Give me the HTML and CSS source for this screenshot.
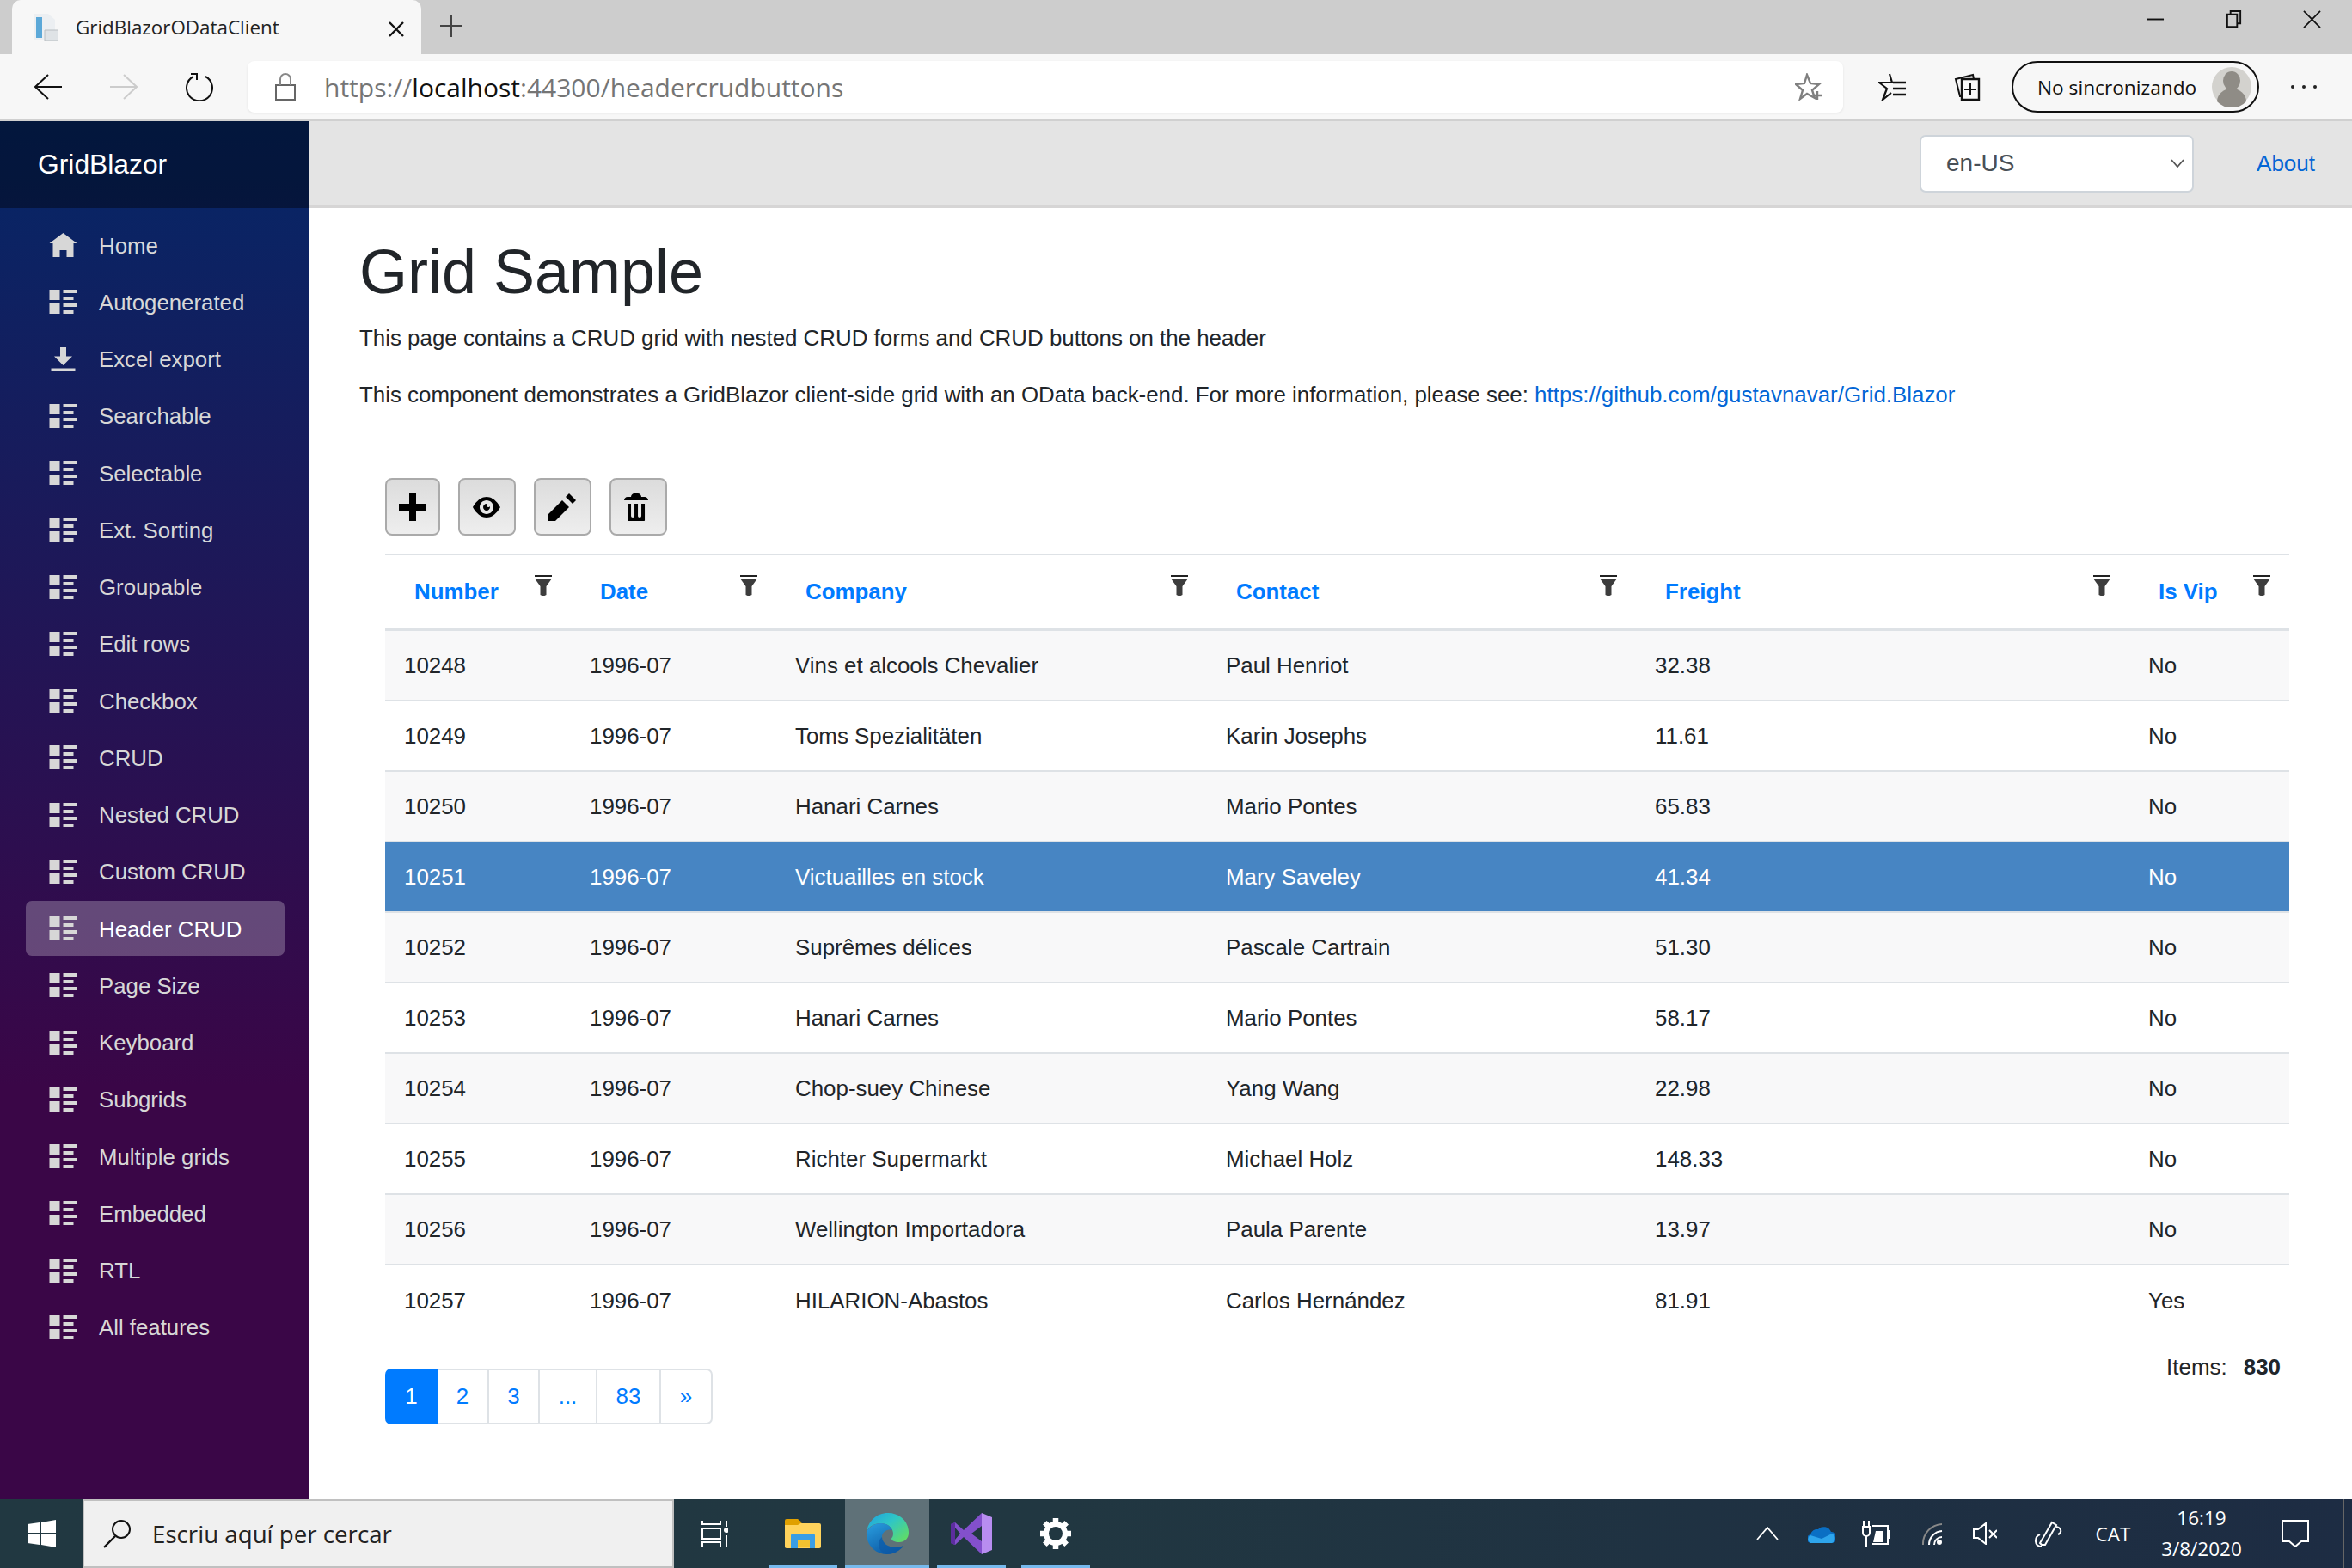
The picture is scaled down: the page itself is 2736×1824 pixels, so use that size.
FILE: index.html
```html
<!DOCTYPE html>
<html>
<head>
  <title>GridBlazorODataClient</title>
  <meta name="viewport" content="width=device-width, initial-scale=1.0">
  <link rel="stylesheet" href="styles.css">
</head>
<body>

  <svg class="sprite">
    <symbol id="i-home" viewBox="0 0 8 7"><path d="M4 0l-4 3h1v4h2v-2h2v2h2v-4.03l1 .03-4-3z"/></symbol>
    <symbol id="i-list" viewBox="0 0 8 7"><path d="M0 0v3h3v-3h-3zm4 0v1h4v-1h-4zm0 2v1h3v-1h-3zm-4 2v3h3v-3h-3zm4 0v1h4v-1h-4zm0 2v1h3v-1h-3z"/></symbol>
    <symbol id="i-down" viewBox="0 0 8 8"><path d="M3 0v3h-2l3 3 3-3h-2v-3h-2zm-3 7v1h8v-1h-8z"/></symbol>
    <symbol id="i-filter" viewBox="0 0 20 24"><path d="M0 0h20v2h-20z"/><path d="M0 4h20l-6.500 9v10l-2 1h-3l-2-1v-10z" opacity=".88"/></symbol>
  </svg>

  <div class="browser-tabs">
    <div class="tab">
      <svg class="favicon" viewBox="0 0 32 32"><path d="M3 0h17l8 7v24h-25z" fill="#eceff2"/><path d="M6 4h7v24h-7z" fill="#5ba8d8"/><path d="M16 19h16v13h-16z" fill="#dfe3e6" stroke="#b9bec2"/></svg>
      <span class="tab-title">GridBlazorODataClient</span>
      <svg class="tab-close" viewBox="0 0 18 18"><path d="M1 1l16 16M17 1l-16 16" stroke="#111" stroke-width="2.4"/></svg>
    </div>
    <svg class="new-tab" viewBox="0 0 26 26"><path d="M13 0v26M0 13h26" stroke="#444" stroke-width="2"/></svg>
    <div class="window-controls">
      <svg class="win-btn" viewBox="0 0 22 22"><path d="M1 11h20" stroke="#111" stroke-width="2"/></svg>
      <svg class="win-btn" viewBox="0 0 22 22"><path d="M3 5h12v15h-12z M7 5v-4h12v15h-4" fill="none" stroke="#111" stroke-width="2"/></svg>
      <svg class="win-btn" viewBox="0 0 22 22"><path d="M1 1l20 20M21 1l-20 20" stroke="#111" stroke-width="1.8"/></svg>
    </div>
  </div>

  <div class="browser-toolbar">
    <svg class="tool-back" viewBox="0 0 32 30"><path d="M16 1l-15 14 15 14M1 15h31" fill="none" stroke="#111" stroke-width="2"/></svg>
    <svg class="tool-forward" viewBox="0 0 32 30"><path d="M16 1l15 14-15 14M31 15h-31" fill="none" stroke="#ccc" stroke-width="2"/></svg>
    <svg class="tool-refresh" viewBox="0 0 32 32"><path d="M9 4a15 15 0 1 0 14 0" fill="none" stroke="#111" stroke-width="2"/><path d="M6 1h7v7" fill="none" stroke="#111" stroke-width="2"/></svg>
    <div class="address-box">
      <svg class="lock" viewBox="0 0 24 32"><path d="M1 14h22v17h-22z" fill="none" stroke="#666" stroke-width="2"/><path d="M6 14v-7a6 6 0 0 1 12 0v7" fill="none" stroke="#888" stroke-width="2"/></svg>
      <span class="url"><span class="url-dim">https://</span>localhost<span class="url-dim">:44300/headercrudbuttons</span></span>
      <svg class="url-star" viewBox="0 0 32 32"><path d="M14 2l4 10 10 1-8 7 3 9-9-5-8 6 3-10-8-7 10-1z" fill="none" stroke="#808080" stroke-width="2.4"/><path d="M26 21v10M21 26h10" stroke="#808080" stroke-width="2.4"/></svg>
    </div>
    <svg class="tool-fav" viewBox="0 0 32 32"><path d="M13 1l3 10h-15l9 7-5 13 10-8" fill="none" stroke="#111" stroke-width="2.2"/><path d="M17 11h15M17 18h15M17 25h15" stroke="#111" stroke-width="2.4"/></svg>
    <svg class="tool-coll" viewBox="0 0 32 32"><path d="M9 7h20v24h-20z" fill="none" stroke="#111" stroke-width="2.4"/><path d="M9 27h-2l-5-20 20-5 1 5" fill="none" stroke="#111" stroke-width="2"/><path d="M19 12v14M12 19h14" stroke="#111" stroke-width="2"/></svg>
    <div class="profile-pill">
      <span class="profile-text">No sincronizando</span>
      <svg class="avatar" viewBox="0 0 46 46"><circle cx="23" cy="23" r="23" fill="#d3d2ce"/><ellipse cx="23" cy="16" rx="10" ry="11" fill="#8f8c86"/><path d="M6 40a17 15 0 0 1 34 0 23 23 0 0 1-34 0z" fill="#8f8c86"/></svg>
    </div>
    <div class="tool-dots"><i></i><i></i><i></i></div>
  </div>

  <div class="page">
    <div class="sidebar">
      <div class="brand">GridBlazor</div>
      <ul class="nav">
        <li class="nav-item"><svg class="nav-icon"><use href="#i-home"/></svg>Home</li>
        <li class="nav-item"><svg class="nav-icon"><use href="#i-list"/></svg>Autogenerated</li>
        <li class="nav-item"><svg class="nav-icon"><use href="#i-down"/></svg>Excel export</li>
        <li class="nav-item"><svg class="nav-icon"><use href="#i-list"/></svg>Searchable</li>
        <li class="nav-item"><svg class="nav-icon"><use href="#i-list"/></svg>Selectable</li>
        <li class="nav-item"><svg class="nav-icon"><use href="#i-list"/></svg>Ext. Sorting</li>
        <li class="nav-item"><svg class="nav-icon"><use href="#i-list"/></svg>Groupable</li>
        <li class="nav-item"><svg class="nav-icon"><use href="#i-list"/></svg>Edit rows</li>
        <li class="nav-item"><svg class="nav-icon"><use href="#i-list"/></svg>Checkbox</li>
        <li class="nav-item"><svg class="nav-icon"><use href="#i-list"/></svg>CRUD</li>
        <li class="nav-item"><svg class="nav-icon"><use href="#i-list"/></svg>Nested CRUD</li>
        <li class="nav-item"><svg class="nav-icon"><use href="#i-list"/></svg>Custom CRUD</li>
        <li class="nav-item active"><svg class="nav-icon"><use href="#i-list"/></svg>Header CRUD</li>
        <li class="nav-item"><svg class="nav-icon"><use href="#i-list"/></svg>Page Size</li>
        <li class="nav-item"><svg class="nav-icon"><use href="#i-list"/></svg>Keyboard</li>
        <li class="nav-item"><svg class="nav-icon"><use href="#i-list"/></svg>Subgrids</li>
        <li class="nav-item"><svg class="nav-icon"><use href="#i-list"/></svg>Multiple grids</li>
        <li class="nav-item"><svg class="nav-icon"><use href="#i-list"/></svg>Embedded</li>
        <li class="nav-item"><svg class="nav-icon"><use href="#i-list"/></svg>RTL</li>
        <li class="nav-item"><svg class="nav-icon"><use href="#i-list"/></svg>All features</li>
      </ul>
    </div>

    <div class="main">
      <div class="top-row">
        <div class="lang-select">en-US
          <svg class="lang-arrow" viewBox="0 0 16 10"><path d="M1 1l7 8 7-8" fill="none" stroke="#555" stroke-width="1.8"/></svg>
        </div>
        <a class="about" href="#">About</a>
      </div>

      <div class="content">
        <h1>Grid Sample</h1>
        <p class="intro">This page contains a CRUD grid with nested CRUD forms and CRUD buttons on the header</p>
        <p class="intro intro-second">This component demonstrates a GridBlazor client-side grid with an OData back-end. For more information, please see: <a href="#">https://github.com/gustavnavar/Grid.Blazor</a></p>

        <div class="grid-wrap">
          <div class="grid-buttons">
            <button class="grid-btn btn-add"><svg viewBox="0 0 8 8"><path d="M3 0v3h-3v2h3v3h2v-3h3v-2h-3v-3h-2z"/></svg></button>
            <button class="grid-btn"><svg viewBox="0 0 8 8"><path transform="translate(0 1)" d="M4.030 0c-2.530 0-4.030 3-4.030 3s1.500 3 4.030 3c2.470 0 3.970-3 3.970-3s-1.500-3-3.970-3zm-.03 1c1.110 0 2 .9 2 2 0 1.110-.89 2-2 2-1.100 0-2-.89-2-2 0-1.100.9-2 2-2zm0 1c-.55 0-1 .45-1 1s.45 1 1 1 1-.45 1-1c0-.1-.04-.19-.06-.28-.08.16-.24.28-.44.28-.28 0-.5-.22-.5-.5 0-.2.12-.36.28-.44-.09-.03-.18-.06-.28-.06z"/></svg></button>
            <button class="grid-btn"><svg viewBox="0 0 8 8"><path d="M6 0l-1 1 2 2 1-1-2-2zm-2 2l-4 4v2h2l4-4-2-2z"/></svg></button>
            <button class="grid-btn"><svg viewBox="0 0 8 8"><path d="M3 0c-.55 0-1 .45-1 1h-1c-.55 0-1 .45-1 1h7c0-.55-.45-1-1-1h-1c0-.55-.45-1-1-1h-1zm-2 3v4.810c0 .11.08.19.19.19h4.630c.11 0 .19-.08.19-.19v-4.810h-1v3.500c0 .28-.22.5-.5.5s-.5-.22-.5-.5v-3.500h-1v3.500c0 .28-.22.5-.5.5s-.5-.22-.5-.5v-3.500h-1z"/></svg></button>
          </div>

          <table class="grid-table">
            <colgroup>
              <col class="col-number"><col class="col-date"><col class="col-company"><col class="col-contact"><col class="col-freight"><col class="col-vip">
            </colgroup>
            <thead>
              <tr>
                <th><div class="th-inner"><a href="#">Number</a><svg class="filter"><use href="#i-filter"/></svg></div></th>
                <th><div class="th-inner"><a href="#">Date</a><svg class="filter"><use href="#i-filter"/></svg></div></th>
                <th><div class="th-inner"><a href="#">Company</a><svg class="filter"><use href="#i-filter"/></svg></div></th>
                <th><div class="th-inner"><a href="#">Contact</a><svg class="filter"><use href="#i-filter"/></svg></div></th>
                <th><div class="th-inner"><a href="#">Freight</a><svg class="filter"><use href="#i-filter"/></svg></div></th>
                <th><div class="th-inner"><a href="#">Is Vip</a><svg class="filter"><use href="#i-filter"/></svg></div></th>
              </tr>
            </thead>
            <tbody>
              <tr class="striped"><td>10248</td><td>1996-07</td><td>Vins et alcools Chevalier</td><td>Paul Henriot</td><td>32.38</td><td>No</td></tr>
              <tr><td>10249</td><td>1996-07</td><td>Toms Spezialitäten</td><td>Karin Josephs</td><td>11.61</td><td>No</td></tr>
              <tr class="striped"><td>10250</td><td>1996-07</td><td>Hanari Carnes</td><td>Mario Pontes</td><td>65.83</td><td>No</td></tr>
              <tr class="selected"><td>10251</td><td>1996-07</td><td>Victuailles en stock</td><td>Mary Saveley</td><td>41.34</td><td>No</td></tr>
              <tr class="striped"><td>10252</td><td>1996-07</td><td>Suprêmes délices</td><td>Pascale Cartrain</td><td>51.30</td><td>No</td></tr>
              <tr><td>10253</td><td>1996-07</td><td>Hanari Carnes</td><td>Mario Pontes</td><td>58.17</td><td>No</td></tr>
              <tr class="striped"><td>10254</td><td>1996-07</td><td>Chop-suey Chinese</td><td>Yang Wang</td><td>22.98</td><td>No</td></tr>
              <tr><td>10255</td><td>1996-07</td><td>Richter Supermarkt</td><td>Michael Holz</td><td>148.33</td><td>No</td></tr>
              <tr class="striped"><td>10256</td><td>1996-07</td><td>Wellington Importadora</td><td>Paula Parente</td><td>13.97</td><td>No</td></tr>
              <tr class="last-row"><td>10257</td><td>1996-07</td><td>HILARION-Abastos</td><td>Carlos Hernández</td><td>81.91</td><td>Yes</td></tr>
            </tbody>
          </table>

          <div class="grid-footer">
            <div class="pager">
              <a class="page-link page-first current" href="#">1</a>
              <a class="page-link page-2" href="#">2</a>
              <a class="page-link page-3" href="#">3</a>
              <a class="page-link page-dots" href="#">...</a>
              <a class="page-link page-83" href="#">83</a>
              <a class="page-link page-next" href="#">»</a>
            </div>
            <div class="items-count">Items: <strong>830</strong></div>
          </div>
        </div>
      </div>
    </div>
  </div>

  <div class="taskbar">
    <div class="start">
      <svg class="start-logo" viewBox="0 0 33 32"><path d="M0 5l14-2v12h-14zM16 3l17-3v15h-17zM0 17h14v12l-14-2zM16 17h17v15l-17-3z" fill="#fff"/></svg>
    </div>
    <div class="search-box">
      <svg class="search-icon" viewBox="0 0 33 34"><circle cx="21" cy="12" r="10" fill="none" stroke="#111" stroke-width="2"/><path d="M14 20l-13 13" stroke="#111" stroke-width="2.4"/></svg>
      <span class="search-text">Escriu aquí per cercar</span>
    </div>
    <div class="task-cell cell-view">
      <svg class="task-view" viewBox="0 0 31 32"><path d="M1 1v4h21v-4M1 31v-5h21v5M1 10h21v12h-21zM29 1v7M29 18v13" fill="none" stroke="#fff" stroke-width="2"/><circle cx="29" cy="12" r="3" fill="#fff"/></svg>
    </div>
    <div class="task-cell running">
      <svg class="task-folder" viewBox="0 0 42 34"><path d="M0 5h40a2 2 0 0 1 2 2v25a2 2 0 0 1-2 2h-38a2 2 0 0 1-2-2z" fill="#ffd35c"/><path d="M0 2a2 2 0 0 1 2-2h13l5 4-5 3h-15z" fill="#e0a000"/><path d="M7 19a2 2 0 0 1 2-2h24a2 2 0 0 1 2 2v15h-6v-10h-14v10h-8z" fill="#3a9ee6"/><path d="M15 24h14v8h-14z" fill="#f2c230"/></svg>
    </div>
    <div class="task-cell running active">
      <svg class="task-edge" viewBox="0 0 50 48">
        <defs>
          <linearGradient id="edge-top" x1="0" y1="0" x2="1" y2=".8"><stop offset="0" stop-color="#1f9fe0"/><stop offset=".5" stop-color="#2fc6c6"/><stop offset="1" stop-color="#5fdc68"/></linearGradient>
          <linearGradient id="edge-low" x1="0" y1="0" x2=".6" y2="1"><stop offset="0" stop-color="#2a9fe0"/><stop offset="1" stop-color="#0c59a4"/></linearGradient>
        </defs>
        <path d="M1 22C3 9 13 0 26 0c13 0 24 9 24 23 0 7-5 11-11 11-5 0-9-2-9-4 0-1 2-2 2-6 0-6-6-12-14-12C10 12 3 16 1 22z" fill="url(#edge-top)"/>
        <path d="M1 22c3-6 9-10 17-10 6 0 11 3 13 8-6-2-12 2-12 8 0 7 7 12 15 12 4 0 8-1 10-2-4 6-12 10-19 10C12 48 0 38 1 22z" fill="url(#edge-low)"/>
        <path d="M19 28c0 7 7 12 15 12 4 0 8-1 10-2-4 6-12 10-19 10-6-1-10-6-10-12 0-4 2-6 4-8z" fill="#0d5aa6" opacity=".7"/>
      </svg>
    </div>
    <div class="task-cell running">
      <svg class="task-vs" viewBox="0 0 48 48"><path fill-rule="evenodd" d="M36 0L15 20 5 11 0 13v22l5 2 10-9 21 20V33L24 24l12-9zM5 17v14l6-7z" fill="#8350cc"/><path d="M0 13l5-2v6l0 14v6l-5-2z" fill="#5c2d9e"/><path d="M36 0l12 5v38l-12 5z" fill="#b88df0"/></svg>
    </div>
    <div class="task-cell running">
      <svg class="task-gear" viewBox="0 0 36 36"><circle cx="18" cy="18" r="11" fill="none" stroke="#fff" stroke-width="6"/><path d="M18 0v7M18 29v7M0 18h7M29 18h7M5.300 5.300l5 5M25.700 25.700l5 5M5.300 30.700l5-5M25.700 10.300l5-5" stroke="#fff" stroke-width="6.500"/></svg>
    </div>

    <div class="tray">
      <div class="tray-item tray-chevron"><svg class="tray-svg-chevron" viewBox="0 0 26 16"><path d="M1 15l12-14 12 14" fill="none" stroke="#fff" stroke-width="1.800"/></svg></div>
      <div class="tray-item tray-cloud"><svg class="tray-svg-cloud" viewBox="0 0 32 22"><path d="M5 22a5 5 0 0 1-2-10 8 8 0 0 1 9-6 9 9 0 0 1 15 3 6 6 0 0 1 1 13z" fill="#0a6fc4"/><path d="M3 22a5 5 0 0 1 0-9l13 4 12-6a6 6 0 0 1 0 11z" fill="#2ea5ec"/></svg></div>
      <div class="tray-item tray-battery"><svg class="tray-svg-battery" viewBox="0 0 33 30"><path d="M12 6h18v21h-18" fill="none" stroke="#fff" stroke-width="2"/><path d="M16 12h9v13h-12z" fill="#fff"/><path d="M30 11h3v10h-3z" fill="#fff"/><path d="M2 0v7M8 0v7M1 7h8v7a4 4 0 0 1-8 0zM5 18v12" fill="none" stroke="#fff" stroke-width="2"/></svg></div>
      <div class="tray-item tray-wifi"><svg class="tray-svg-wifi" viewBox="0 0 24 26"><path d="M1 26a23 23 0 0 1 22-24" fill="none" stroke="#888" stroke-width="2"/><path d="M8 26a16 16 0 0 1 15-16" fill="none" stroke="#fff" stroke-width="2"/><path d="M14 26a9 9 0 0 1 9-9" fill="none" stroke="#fff" stroke-width="2"/><circle cx="20" cy="23" r="3" fill="#fff"/></svg></div>
      <div class="tray-item tray-volume"><svg class="tray-svg-volume" viewBox="0 0 28 26"><path d="M1 8h5l9-7v24l-9-7h-5z" fill="none" stroke="#fff" stroke-width="2"/><path d="M19 9l9 9M28 9l-9 9" stroke="#fff" stroke-width="2"/></svg></div>
      <div class="tray-item tray-pen"><svg class="tray-svg-pen" viewBox="0 0 33 32"><path d="M9 29l-2-2 14-24 5 3-13 23z" fill="none" stroke="#fff" stroke-width="2"/><path d="M26 8c6 1 7 7 2 9M7 17c-7 3-7 14 2 14" fill="none" stroke="#fff" stroke-width="2"/></svg></div>
      <div class="tray-item tray-lang">CAT</div>
      <div class="tray-item tray-clock"><span>16:19</span><span>3/8/2020</span></div>
      <div class="tray-item tray-notify"><svg class="tray-svg-notify" viewBox="0 0 32 32"><path d="M1 1h30v24h-8l-7 6-7-6h-8z" fill="none" stroke="#fff" stroke-width="2"/></svg></div>
      <div class="tray-desktop"></div>
    </div>
  </div>

</body>
</html>
```

FILE: styles.css
```css
* {
  box-sizing: border-box;
}
html, body {
  margin: 0;
  padding: 0;
}
body {
  width: 2736px;
  height: 1824px;
  overflow: hidden;
  display: flex;
  flex-direction: column;
  font-family: "Liberation Sans", Arial, sans-serif;
  font-size: 25.9px;
  color: #212529;
  background: #fff;
}
a {
  color: #0366d6;
  text-decoration: none;
}
.sprite {
  display: none;
}

/* browser chrome */
.browser-tabs {
  height: 63px;
  flex: none;
  display: flex;
  align-items: flex-start;
  background: #cdcdcd;
  padding-left: 14px;
  font-family: "Open Sans", sans-serif;
}
.tab {
  width: 476px;
  height: 63px;
  display: flex;
  align-items: center;
  background: #f7f7f7;
  border-radius: 10px 10px 0 0;
  padding-left: 22px;
}
.favicon {
  width: 32px;
  height: 32px;
}
.tab-title {
  margin-left: 20px;
  width: 364px;
  font-size: 22.4px;
  color: #222;
}
.tab-close {
  width: 18px;
  height: 18px;
  margin-top: 4px;
}
.new-tab {
  width: 26px;
  height: 26px;
  margin: 17px 0 0 22px;
}
.window-controls {
  margin-left: auto;
  display: flex;
  gap: 70px;
  padding: 12px 36px 0 0;
}
.win-btn {
  width: 21px;
  height: 21px;
}
.browser-toolbar {
  height: 78px;
  flex: none;
  display: flex;
  align-items: center;
  background: #f7f7f7;
  border-bottom: 2px solid #d0d0d0;
  padding-left: 40px;
  font-family: "Open Sans", sans-serif;
}
.tool-back, .tool-forward {
  width: 32px;
  height: 30px;
}
.tool-forward {
  margin-left: 56px;
}
.tool-refresh {
  width: 32px;
  height: 32px;
  margin-left: 56px;
}
.address-box {
  width: 1856px;
  height: 60px;
  margin-left: 40px;
  display: flex;
  align-items: center;
  background: #fff;
  border-radius: 8px;
  box-shadow: 0 1px 3px rgba(0, 0, 0, .08);
  padding-left: 32px;
}
.lock {
  width: 24px;
  height: 32px;
}
.url {
  margin-left: 33px;
  font-size: 30px;
  color: #111;
}
.url-dim {
  color: #757575;
}
.url-star {
  width: 32px;
  height: 32px;
  margin-left: auto;
  margin-right: 24px;
}
.tool-fav {
  width: 32px;
  height: 32px;
  margin-left: 41px;
}
.tool-coll {
  width: 32px;
  height: 32px;
  margin-left: 56px;
}
.profile-pill {
  width: 288px;
  height: 60px;
  margin-left: 35px;
  display: flex;
  align-items: center;
  border: 2px solid #111;
  border-radius: 30px;
  padding-left: 28px;
}
.profile-text {
  width: 203px;
  font-size: 22.7px;
  color: #111;
  white-space: nowrap;
}
.avatar {
  width: 46px;
  height: 46px;
}
.tool-dots {
  margin-left: 37px;
  display: flex;
  gap: 9px;
}
.tool-dots i {
  width: 4px;
  height: 4px;
  border-radius: 50%;
  background: #222;
}

/* page */
.page {
  flex: 1;
  display: flex;
  min-height: 0;
}
.sidebar {
  width: 360px;
  flex: none;
  background: linear-gradient(180deg, #052767 0%, #3a0647 70%);
  color: #d7d7d7;
}
.brand {
  height: 101px;
  display: flex;
  align-items: center;
  padding-left: 44px;
  background: rgba(0, 0, 0, .4);
  color: #fff;
  font-size: 31.8px;
}
.nav {
  list-style: none;
  margin: 0;
  padding: 11px 0 0 30px;
}
.nav-item {
  width: 301px;
  height: 64px;
  margin-bottom: 2.25px;
  display: flex;
  align-items: center;
  padding: 2px 0 0 27px;
  border-radius: 7px;
  font-size: 25.8px;
}
.nav-item.active {
  background: rgba(255, 255, 255, .25);
  color: #fff;
}
.nav-icon {
  width: 33px;
  height: 28px;
  margin: -2px 25px 0 0;
  fill: #d7d7d7;
  flex: none;
}
.main {
  flex: 1;
  min-width: 0;
}
.top-row {
  height: 101px;
  display: flex;
  align-items: center;
  background: #e4e4e4;
  border-bottom: 3px solid #d6d5d5;
  padding: 0 43px 0 1873px;
}
.lang-select {
  width: 319px;
  height: 67px;
  display: flex;
  align-items: center;
  background: #fff;
  border: 2px solid #ced4da;
  border-radius: 7px;
  padding-left: 29px;
  font-size: 28px;
  color: #495057;
}
.lang-arrow {
  width: 16px;
  height: 10px;
  margin-left: auto;
  margin-right: 9px;
}
.about {
  margin-left: auto;
  font-size: 26px;
}
.content {
  padding: 32px 73px 0 58px;
}
h1 {
  margin: 0 0 16px;
  font-size: 72px;
  font-weight: 400;
  line-height: 84px;
}
.intro {
  margin: 0;
  line-height: 38px;
}
.intro-second {
  margin-top: 28px;
}

/* grid */
.grid-wrap {
  margin: 78px 0 0 30px;
}
.grid-buttons {
  display: flex;
  margin-bottom: 21px;
}
.grid-btn {
  width: 66.5px;
  height: 67px;
  margin-right: 21.5px;
  padding: 0;
  display: flex;
  align-items: center;
  justify-content: center;
  background: linear-gradient(180deg, #dcdcdc, #eeeeee);
  border: 2px solid #aaa;
  border-radius: 8px;
}
.btn-add {
  width: 64px;
  margin-right: 21px;
}
.grid-btn svg {
  width: 32px;
  height: 32px;
  fill: #000;
}
.grid-table {
  width: 2215px;
  table-layout: fixed;
  border-collapse: separate;
  border-spacing: 0;
}
.col-number { width: 216px; }
.col-date { width: 239px; }
.col-company { width: 501px; }
.col-contact { width: 499px; }
.col-freight { width: 574px; }
.col-vip { width: 186px; }
.grid-table th {
  height: 90px;
  padding: 0 22px 0 34px;
  border-top: 2px solid #dee2e6;
  border-bottom: 4px solid #dee2e6;
  text-align: left;
}
.grid-table th a {
  color: #007bff;
}
.th-inner {
  display: flex;
  justify-content: space-between;
  align-items: center;
}
.filter {
  width: 20px;
  height: 24px;
  fill: #222;
  margin-top: -14px;
}
.grid-table td {
  height: 82px;
  padding: 0 22px;
  border-bottom: 2px solid #dee2e6;
}
.striped td {
  background: #f8f8f9;
}
.selected td {
  background: #4785c3;
  color: #fff;
}
.last-row td {
  border-bottom: none;
}
.grid-footer {
  display: flex;
  justify-content: space-between;
  align-items: flex-start;
}
.pager {
  margin-top: 38px;
  height: 65px;
  display: flex;
  border: 2px solid #dee2e6;
  border-radius: 7px;
}
.page-link {
  display: flex;
  align-items: center;
  justify-content: center;
  color: #007bff;
  border-right: 2px solid #dee2e6;
  margin: -2px 0;
  padding: 2px 0;
}
.page-first { width: 61px; margin-left: -2px; border-radius: 7px 0 0 7px; border-right: none; }
.page-2 { width: 60px; }
.page-3 { width: 59px; }
.page-dots { width: 67px; }
.page-83 { width: 74px; }
.page-next { width: 58px; border-right: none; }
.current {
  background: #007bff;
  color: #fff;
}
.items-count {
  margin: 17px 10px 0 0;
  line-height: 38px;
  word-spacing: 12px;
}

/* taskbar */
.taskbar {
  height: 80px;
  flex: none;
  display: flex;
  align-items: center;
  background: linear-gradient(90deg, #213841 0%, #213741 45%, #1d2c43 100%);
  font-family: "Open Sans", sans-serif;
  color: #fff;
}
.start {
  width: 96px;
  display: flex;
  justify-content: center;
}
.start-logo {
  width: 33px;
  height: 32px;
}
.search-box {
  width: 688px;
  height: 80px;
  display: flex;
  align-items: center;
  background: #f0f0f0;
  border: 2px solid #c0c0c0;
  padding-left: 22px;
  color: #222;
}
.search-icon {
  width: 33px;
  height: 34px;
}
.search-text {
  margin-left: 24px;
  font-size: 27.7px;
}
.task-cell {
  position: relative;
  width: 98px;
  height: 80px;
  display: flex;
  align-items: center;
  justify-content: center;
}
.cell-view {
  width: 101px;
}
.task-view {
  width: 31px;
  height: 32px;
  margin-right: 7px;
}
.task-folder {
  width: 42px;
  height: 34px;
}
.task-edge {
  width: 50px;
  height: 48px;
}
.task-vs {
  width: 48px;
  height: 48px;
}
.task-gear {
  width: 36px;
  height: 36px;
}
.running::after {
  content: "";
  position: absolute;
  left: 9px;
  right: 9px;
  bottom: 0;
  height: 4px;
  background: #76b9ed;
}
.active {
  background: #5f7178;
}
.active::after {
  left: 0;
  right: 0;
}
.tray {
  margin-left: auto;
  height: 80px;
  display: flex;
  align-items: center;
}
.tray-item {
  height: 80px;
  display: flex;
  align-items: center;
  justify-content: center;
}
.tray-chevron { width: 63px; }
.tray-cloud { width: 64px; }
.tray-battery { width: 62px; }
.tray-wifi { width: 70px; }
.tray-volume { width: 52px; }
.tray-pen { width: 94px; }
.tray-lang { width: 58px; font-size: 22.5px; }
.tray-clock {
  width: 148px;
  flex-direction: column;
  font-size: 22.5px;
  line-height: 36px;
}
.tray-notify { width: 70px; }
.tray-desktop {
  height: 80px;
  margin-left: 20px;
  width: 11px;
  border-left: 2px solid #666;
}
.tray-svg-chevron { width: 26px; height: 16px; }
.tray-svg-cloud { width: 32px; height: 22px; }
.tray-svg-battery { width: 33px; height: 30px; }
.tray-svg-wifi { width: 24px; height: 26px; }
.tray-svg-volume { width: 28px; height: 26px; }
.tray-svg-pen { width: 33px; height: 32px; }
.tray-svg-notify { width: 32px; height: 32px; }
```
